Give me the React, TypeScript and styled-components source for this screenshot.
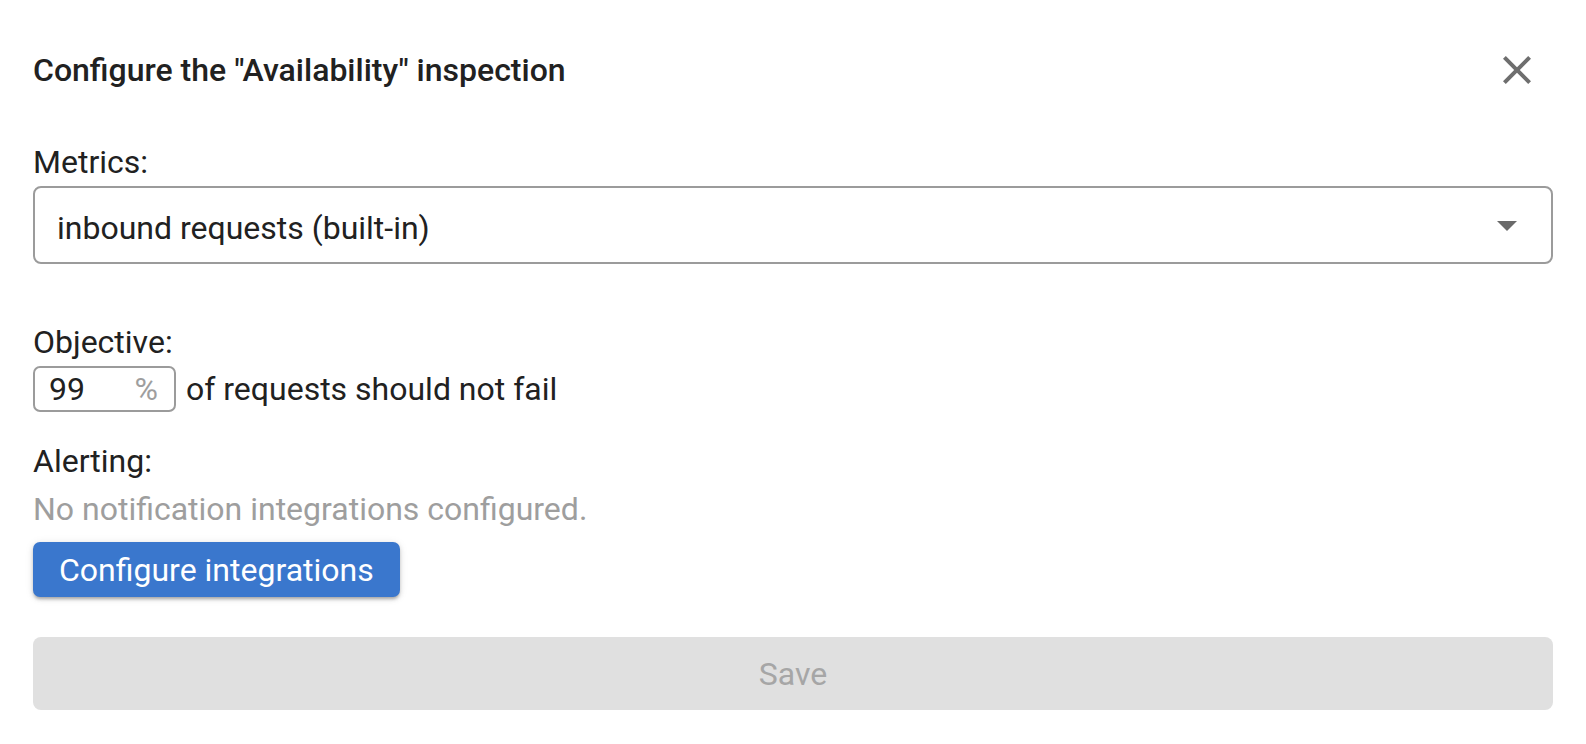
import React from "react";
import styled, { createGlobalStyle } from "styled-components";

const GlobalStyle = createGlobalStyle`
  html, body {
    margin: 0;
    padding: 0;
    background: #ffffff;
  }
  body {
    font-family: Roboto, "Liberation Sans", Arial, sans-serif;
    color: #212121;
    -webkit-font-smoothing: antialiased;
  }
  * { box-sizing: border-box; }
`;

const Dialog = styled.div`
  width: 1586px;
  padding: 34px 33px 33px 33px;
  display: flex;
  flex-direction: column;
`;

const TitleRow = styled.div`
  display: flex;
  align-items: center;
  justify-content: space-between;
  height: 72px;
`;

const Title = styled.h2`
  margin: 0;
  font-size: 32px;
  font-weight: 500;
  line-height: 48px;
  color: #212121;
`;

const CloseButton = styled.button`
  width: 72px;
  height: 72px;
  padding: 12px;
  border: none;
  background: transparent;
  border-radius: 50%;
  display: flex;
  align-items: center;
  justify-content: center;
  color: #6e6e6e;
  cursor: pointer;
`;

const Label = styled.div<{ $mt?: number }>`
  margin-top: ${(p) => p.$mt ?? 0}px;
  font-size: 32px;
  line-height: 48px;
  color: #212121;
`;

const Select = styled.div`
  height: 78px;
  border: 2px solid #9b9b9b;
  border-radius: 8px;
  padding: 0 22px 0 22px;
  display: flex;
  align-items: center;
  justify-content: space-between;
  font-size: 32px;
  color: #212121;
`;

const SelectValue = styled.span`
  line-height: 40px;
  padding-top: 6px;
`;

const Arrow = styled.span`
  display: flex;
  color: #6a6a6a;
  margin-right: -2px;
`;

const ObjectiveRow = styled.div`
  display: flex;
  align-items: center;
  gap: 10px;
  font-size: 32px;
`;

const NumberBox = styled.div`
  width: 143px;
  height: 46px;
  border: 2px solid #9b9b9b;
  border-radius: 7px;
  padding: 0 16px 0 14px;
  display: flex;
  justify-content: space-between;
  align-items: center;
  line-height: 42px;
`;

const NumberValue = styled.span`
  color: #212121;
`;

const Suffix = styled.span`
  color: #9e9e9e;
`;

const RowText = styled.span`
  line-height: 46px;
  color: #212121;
`;

const Hint = styled.div`
  font-size: 32px;
  line-height: 48px;
  color: #9e9e9e;
`;

const PrimaryButton = styled.button`
  align-self: flex-start;
  margin-top: 9px;
  height: 55px;
  padding: 0 26px;
  border: none;
  border-radius: 7px;
  background: #3a77cd;
  color: #ffffff;
  font-family: inherit;
  font-size: 32px;
  line-height: 40px;
  box-shadow: 0 3px 3px -1px rgba(0, 0, 0, 0.22), 0 2px 5px 0 rgba(0, 0, 0, 0.14),
    0 1px 10px 0 rgba(0, 0, 0, 0.08);
  cursor: pointer;
`;

const SaveButton = styled.button`
  margin-top: 40px;
  height: 73px;
  width: 100%;
  border: none;
  border-radius: 8px;
  background: #e0e0e0;
  color: #a6a6a6;
  font-family: inherit;
  font-size: 32px;
  line-height: 40px;
  cursor: default;
`;

const CloseIcon = () => (
  <svg width="48" height="48" viewBox="0 0 24 24" fill="currentColor">
    <path d="M19 6.41 17.59 5 12 10.59 6.41 5 5 6.41 10.59 12 5 17.59 6.41 19 12 13.41 17.59 19 19 17.59 13.41 12z" />
  </svg>
);

const DropIcon = () => (
  <svg width="48" height="48" viewBox="0 0 24 24" fill="currentColor">
    <path d="M7 10l5 5 5-5z" />
  </svg>
);

export default function App() {
  return (
    <>
      <GlobalStyle />
      <Dialog>
        <TitleRow>
          <Title>Configure the "Availability" inspection</Title>
          <CloseButton aria-label="close">
            <CloseIcon />
          </CloseButton>
        </TitleRow>

        <Label $mt={32}>Metrics:</Label>
        <Select>
          <SelectValue>inbound requests (built-in)</SelectValue>
          <Arrow>
            <DropIcon />
          </Arrow>
        </Select>

        <Label $mt={54}>Objective:</Label>
        <ObjectiveRow>
          <NumberBox>
            <NumberValue>99</NumberValue>
            <Suffix>%</Suffix>
          </NumberBox>
          <RowText>of requests should not fail</RowText>
        </ObjectiveRow>

        <Label $mt={25}>Alerting:</Label>
        <Hint>No notification integrations configured.</Hint>
        <PrimaryButton>Configure integrations</PrimaryButton>

        <SaveButton disabled>Save</SaveButton>
      </Dialog>
    </>
  );
}
